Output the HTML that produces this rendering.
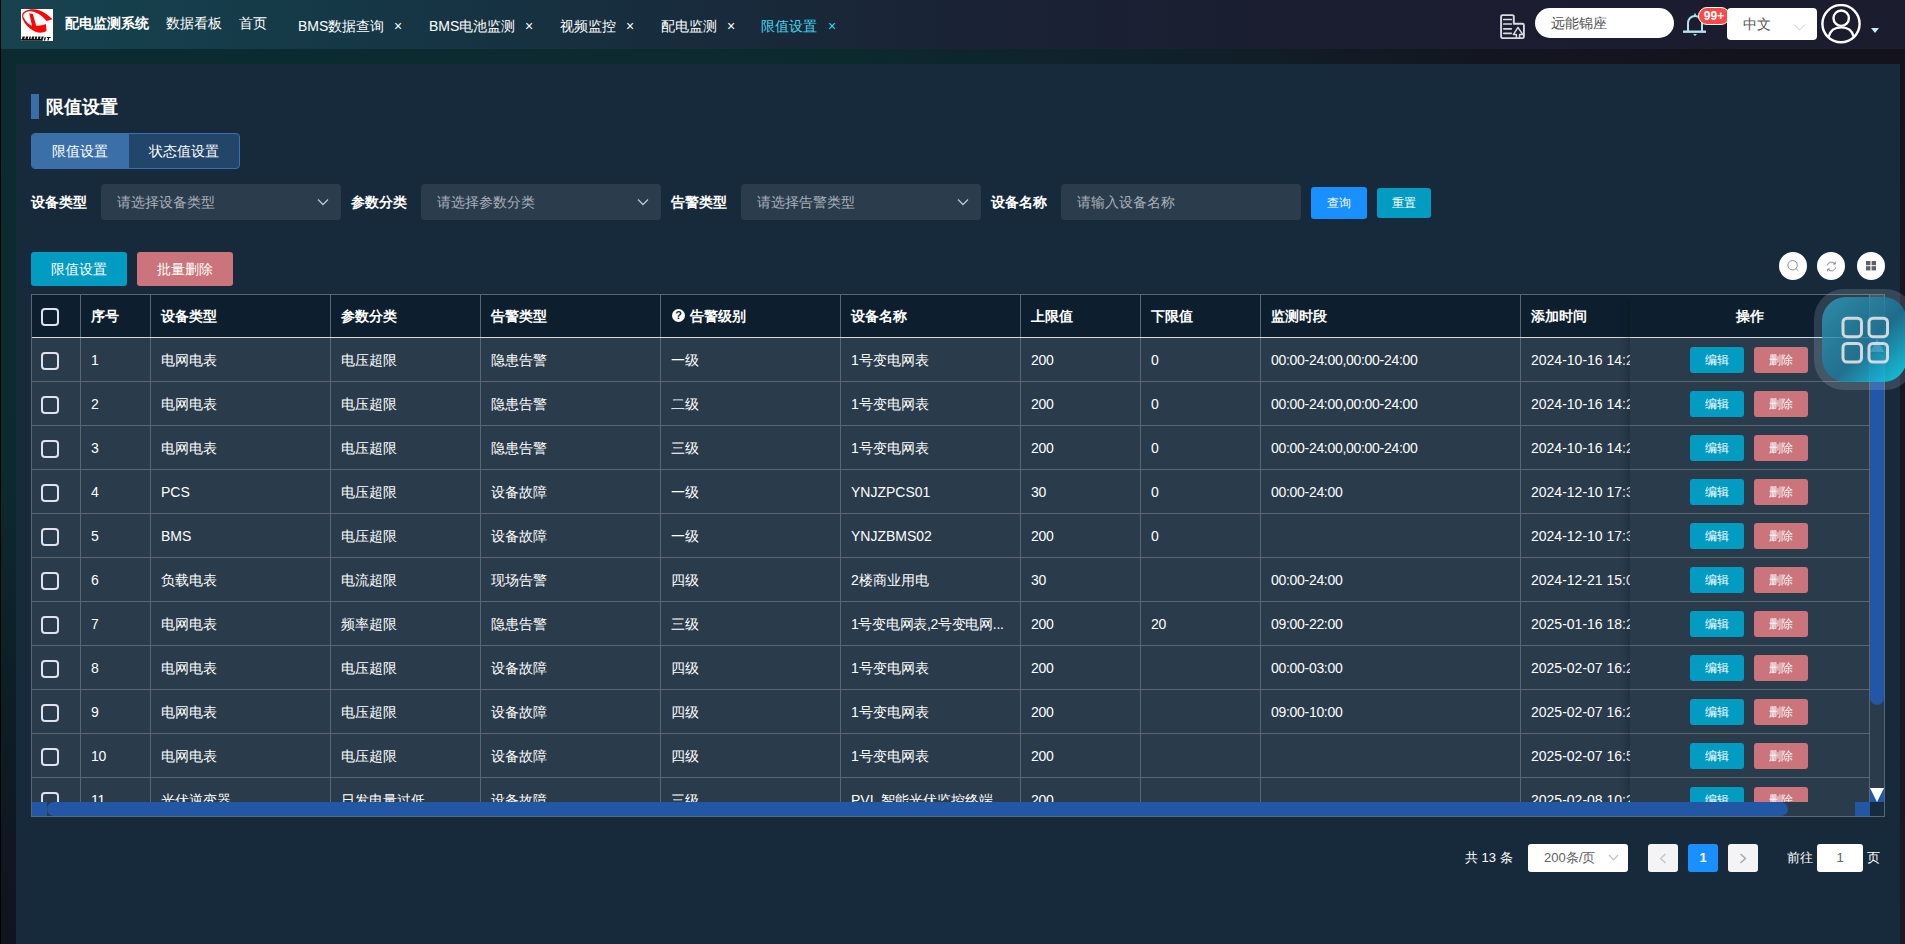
<!DOCTYPE html>
<html lang="zh"><head><meta charset="utf-8"><title>限值设置</title>
<style>
*{box-sizing:border-box;margin:0;padding:0}
html,body{width:1905px;height:944px;overflow:hidden}
body{font-family:"Liberation Sans",sans-serif;font-size:14px;color:#fff;position:relative;
 background:linear-gradient(100deg,#0b2d32 0%,#0d2329 40%,#12131f 80%,#13121d 100%);}
.abs{position:absolute}
#edgeL{position:absolute;left:0;top:0;width:1px;height:944px;background:#000;z-index:50}
#hdr{position:absolute;left:0;top:0;width:1905px;height:49px;background:linear-gradient(90deg,#17434f 0%,#153a48 15%,#182b3c 37%,#1a2235 52%,#1b1d30 70%,#1b1c2e 100%)}
#hdr .t{position:absolute;white-space:nowrap;font-size:14px;line-height:20px;color:#fff}
#logo{position:absolute;left:21px;top:9px;width:32px;height:32px;background:#fff}
#panel{position:absolute;left:16px;top:64px;width:1884px;height:880px;background:#172a3b}
#title{position:absolute;left:46px;top:94px;font-size:18px;font-weight:bold;line-height:26px;white-space:nowrap}
#tbar{position:absolute;left:31px;top:94px;width:8px;height:25px;background:#3b6ea8}
#tabs{position:absolute;left:31px;top:133px;width:209px;height:36px;border:1px solid #3a70ae;border-radius:4px;background:#22456a;overflow:hidden}
#tabs .a{position:absolute;left:0;top:0;width:96px;height:34px;background:#3a6fa7;line-height:34px;text-align:center}
#tabs .b{position:absolute;left:96px;top:0;width:111px;height:34px;line-height:34px;text-align:center;border-left:1px solid #3a70ae}
.lab{position:absolute;top:192px;font-weight:bold;line-height:20px;white-space:nowrap}
.sel{position:absolute;top:184px;width:240px;height:36px;border-radius:4px;background:#2b3c4d;color:#a8b0ba;line-height:36px;padding-left:16px;white-space:nowrap}
.sel svg{position:absolute;right:12px;top:12px}
.btn{position:absolute;border-radius:3px;text-align:center;white-space:nowrap;color:#fff}
#table{position:absolute;left:31px;top:294px;width:1854px;height:523px;border:1px solid #5c6670;overflow:hidden;background:#2a3b4c}
.thead{position:absolute;left:0;top:0;width:1838px;height:43px;background:#0d1f2f;border-bottom:1px solid #d5d9dd;font-weight:bold}
.hc{position:absolute;top:0;height:42px;line-height:42px;padding-left:10px;border-left:1px solid #5c6670;white-space:nowrap;overflow:hidden}
.tr{position:absolute;left:0;width:1838px;height:44px;border-bottom:1px solid #5c6670}
.c{position:absolute;top:0;height:43px;line-height:45px;padding-left:10px;border-left:1px solid #5c6670;white-space:nowrap;overflow:hidden}
.n{letter-spacing:-0.3px}
.cb{position:absolute;left:9px;top:14px;width:18px;height:18px;border:2px solid #dfe2ec;border-radius:4px}
.q{position:absolute;left:11px;top:14px;width:13px;height:13px;border-radius:50%;background:#fff;color:#0d1f2f;font-size:11px;line-height:13px;text-align:center;font-weight:bold}
#fixed{position:absolute;left:1598px;top:0;width:239px;height:507px;background:#2a3b4c;box-shadow:-6px 0 8px -4px rgba(0,0,0,.25)}
.fh{position:absolute;left:0;top:0;width:239px;height:43px;line-height:42px;background:#0d1f2f;border-bottom:1px solid #d5d9dd;font-weight:bold;text-align:center}
.fr{position:absolute;left:0;width:239px;height:44px;border-bottom:1px solid #5c6670}
.be,.bd{position:absolute;top:9px;width:54px;height:26px;border-radius:3px;font-size:12px;line-height:26px;text-align:center;color:#fff}
.be{left:60px;background:#029bc2}
.bd{left:124px;background:#cb747c}
#vsb{position:absolute;left:1837px;top:0;width:15px;height:507px;background:#2a3b4c;border-left:1px solid #5c6670}
#hsb{position:absolute;left:0;top:507px;width:1853px;height:14px;background:#2a3b4c}
.pg{position:absolute;top:844px;height:28px;border-radius:3px;line-height:28px;text-align:center;font-size:13px}
.circ{position:absolute;top:252px;width:28px;height:28px;border-radius:50%;background:#fff}
</style></head><body>
<div id="hdr">
 <div id="logo"><svg width="32" height="32" viewBox="0 0 32 32"><path d="M1 7 C1.2 2.5 6 0.2 12.5 0.3 C20 0.6 26.5 5.5 31.6 10.3 L25.6 11.9 C21 6.5 15 2.4 9 2.3 C5 2.3 2.3 4.5 2.2 7.5 Z" fill="#fb0505"/><path d="M1 7 C1.5 11 4.5 16 9 19.5 C13 22.8 17.5 24 21 23.6 C23 23.4 24.6 22.6 25.6 21.5 L24.8 15.1 C22 16.3 18.5 16.9 15.1 16.7 L11.9 5 L8.2 4.2 L11 16.8 C8 15.8 4.5 12.5 2.2 7.5 Z" fill="#fb0505"/><g fill="#111"><path d="M0.2 30 H21.5 L21.8 31.7 H0.2 Z"/><path d="M1.5 27.6 L4 27.6 L3.2 30.6 L0.8 30.6 Z M5 27.6 L7.3 27.6 L6.6 30.6 L4.2 30.6 Z M8.4 27.6 L10 27.6 L9.4 30.6 L7.7 30.6 Z M11 27.6 L13.4 27.6 L12.7 30.6 L10.3 30.6 Z M14.3 27.6 L16.3 27.6 L15.6 30.6 L13.7 30.6 Z M17.3 27.6 L19.6 27.6 L19 30.6 L16.7 30.6 Z M20.6 27.6 L22.6 27.6 L22 30.6 L20 30.6 Z M23.5 28.2 L25 28.2 L24.2 31.6 L22.8 31.6 Z M26 28 L29.8 28 L29.5 29 L28.3 29 L27.6 31.4 L26.3 31.4 L27 29 L25.7 29 Z"/></g></svg></div>
 <div class="t" style="left:65px;top:13px;font-weight:bold">配电监测系统</div>
 <div class="t" style="left:166px;top:13px">数据看板</div>
 <div class="t" style="left:239px;top:13px">首页</div>
 <div class="t" style="left:298px;top:16px">BMS数据查询</div><div class="t x" style="left:394px;top:16px">×</div>
 <div class="t" style="left:429px;top:16px">BMS电池监测</div><div class="t x" style="left:525px;top:16px">×</div>
 <div class="t" style="left:560px;top:16px">视频监控</div><div class="t x" style="left:626px;top:16px">×</div>
 <div class="t" style="left:661px;top:16px">配电监测</div><div class="t x" style="left:727px;top:16px">×</div>
 <div class="t" style="left:761px;top:16px;color:#3fd6ec">限值设置</div><div class="t x" style="left:828px;top:16px;color:#3fd6ec">×</div>
 <svg class="abs" style="left:1500px;top:14px" width="25" height="25" viewBox="0 0 25 25" fill="none" stroke="#d9dbe1" stroke-width="1.9" stroke-linejoin="round" stroke-linecap="round"><path d="M2.6 1.1 H12.3 a1.5 1.5 0 0 1 1.5 1.5 V9.7 H22.4 a1.5 1.5 0 0 1 1.5 1.5 V22.6 a1.5 1.5 0 0 1 -1.5 1.5 H2.6 a1.5 1.5 0 0 1 -1.5 -1.5 V2.6 a1.5 1.5 0 0 1 1.5 -1.5 Z"/><path d="M3.8 5.5 H11.3 M3.8 10 H11.3 M3.8 14.8 H11.3 M3.8 19.3 H11.3" stroke-width="1.7"/><path d="M16.4 23.6 V20.6 H13.3 L18 13.4 L22.8 20.6 H19.6 V23.6" stroke-width="1.5"/></svg>
 <div class="abs" style="left:1535px;top:8px;width:139px;height:30px;border-radius:15px;background:#fff;color:#555;line-height:30px;padding-left:16px;font-size:14px">远能锦座</div>
 <svg class="abs" style="left:1683px;top:12px" width="24" height="26" viewBox="0 0 24 26" fill="none" stroke="#b4e0f0" stroke-width="2"><path d="M5 19 V11 a7 7 0 0 1 14 0 V19"/><path d="M0 19.7 H23" stroke-width="2.4"/><path d="M10 22 L12 24 L14 22 Z" fill="#b4e0f0" stroke="none"/><path d="M12 4 V1.4" stroke-width="1.6"/></svg>
 <div class="abs" style="left:1698px;top:7px;width:32px;height:18px;border-radius:9px;border:1px solid #fff;background:#f94a4a;color:#fff;font-size:12px;line-height:16px;text-align:center;font-weight:bold">99+</div>
 <div class="abs" style="left:1727px;top:8px;width:90px;height:32px;border-radius:4px;background:#fff;z-index:3;color:#555;line-height:32px;padding-left:16px;font-size:14px">中文<svg class="abs" style="left:66px;top:16px" width="13" height="7" viewBox="0 0 13 7" fill="none" stroke="#c3c8d6" stroke-width="1"><path d="M1 0.5 L6.5 6 L12 0.5"/></svg></div>
 <svg class="abs" style="left:1821px;top:4px" width="40" height="40" viewBox="0 0 40 40" fill="none" stroke="#fff" stroke-width="2.4"><circle cx="20" cy="19.7" r="18.6"/><circle cx="20.2" cy="14.2" r="7.7"/><path d="M7.6 32.8 C9.2 26.5 14 23.4 20.2 23.4 C26.4 23.4 31.2 26.5 32.8 32.8"/></svg>
 <div class="abs" style="left:1871px;top:28px;width:0;height:0;border-left:4px solid transparent;border-right:4px solid transparent;border-top:5px solid #c4ecfb"></div>
</div>
<div id="panel"></div>
<div class="abs" style="left:1900px;top:49px;width:5px;height:895px;background:linear-gradient(180deg,#13121d 0%,#1a1725 50%,#1c1826 100%)"></div><div class="abs" style="left:0;top:49px;width:1900px;height:15px;background:linear-gradient(90deg,#0b2b30 0%,#0c292e 45%,#10202a 62%,#13151f 80%,#13121d 100%)"></div><div class="abs" style="left:0;top:64px;width:16px;height:880px;background:linear-gradient(180deg,#0b2b30 0%,#0b2a2e 48%,#0e1c24 75%,#10141f 100%)"></div>
<div id="tbar"></div><div id="title">限值设置</div>
<div id="tabs"><div class="a">限值设置</div><div class="b">状态值设置</div></div>
<div class="lab" style="left:31px">设备类型</div>
<div class="sel" style="left:101px">请选择设备类型<svg width="12" height="12" viewBox="0 0 12 12" fill="none" stroke="#c0c4cc" stroke-width="1.3"><path d="M1 3.5 L6 8.5 L11 3.5"/></svg></div>
<div class="lab" style="left:351px">参数分类</div>
<div class="sel" style="left:421px">请选择参数分类<svg width="12" height="12" viewBox="0 0 12 12" fill="none" stroke="#c0c4cc" stroke-width="1.3"><path d="M1 3.5 L6 8.5 L11 3.5"/></svg></div>
<div class="lab" style="left:671px">告警类型</div>
<div class="sel" style="left:741px">请选择告警类型<svg width="12" height="12" viewBox="0 0 12 12" fill="none" stroke="#c0c4cc" stroke-width="1.3"><path d="M1 3.5 L6 8.5 L11 3.5"/></svg></div>
<div class="lab" style="left:991px">设备名称</div>
<div class="sel" style="left:1061px">请输入设备名称</div>
<div class="btn" style="left:1311px;top:187px;width:56px;height:32px;line-height:32px;font-size:12px;background:#1890ff">查询</div>
<div class="btn" style="left:1377px;top:188px;width:54px;height:30px;line-height:30px;font-size:12px;background:#029bc2">重置</div>
<div class="btn" style="left:31px;top:252px;width:96px;height:34px;line-height:34px;font-size:14px;background:#029bc2">限值设置</div>
<div class="btn" style="left:137px;top:252px;width:96px;height:34px;line-height:34px;font-size:14px;background:#cb747c">批量删除</div>
<div class="circ" style="left:1779px"><svg class="abs" style="left:8px;top:8px" width="12" height="12" viewBox="0 0 12 12" fill="none" stroke="#7b7f88" stroke-width="0.9"><circle cx="5.6" cy="5.2" r="4.7"/><path d="M9 8.6 L11.3 10.8"/></svg></div>
<div class="circ" style="left:1817px"><svg class="abs" style="left:8.5px;top:8.5px" width="11" height="11" viewBox="0 0 11 11" fill="none" stroke="#7b7f88" stroke-width="0.9"><path d="M1.2 4.6 A4.4 4.4 0 0 1 9 2.8 M9.8 6.4 A4.4 4.4 0 0 1 2 8.2"/><path d="M9.3 0.6 V3 H6.9 M1.7 10.4 V8 H4.1"/></svg></div>
<div class="circ" style="left:1857px"><svg class="abs" style="left:9px;top:9px" width="10" height="10" viewBox="0 0 10 10" fill="#5d6066"><rect x="0" y="0" width="4.4" height="4.2"/><rect x="5.6" y="0" width="4.4" height="4.2"/><rect x="0" y="5.2" width="4.4" height="4.2"/><rect x="5.6" y="5.2" width="4.4" height="4.2"/></svg></div>
<div id="table">
<div class="thead"><div class="hc" style="left:0;width:48px;border-left:0"><span class="cb" style="top:13px"></span></div><div class="hc" style="left:48px;width:70px">序号</div><div class="hc" style="left:118px;width:180px">设备类型</div><div class="hc" style="left:298px;width:150px">参数分类</div><div class="hc" style="left:448px;width:180px">告警类型</div><div class="hc" style="left:628px;width:180px"><span class="q">?</span><span style="margin-left:19px">告警级别</span></div><div class="hc" style="left:808px;width:180px">设备名称</div><div class="hc" style="left:988px;width:120px">上限值</div><div class="hc" style="left:1108px;width:120px">下限值</div><div class="hc" style="left:1228px;width:260px">监测时段</div><div class="hc" style="left:1488px;width:349px">添加时间</div></div><div class="tr" style="top:43px"><div class="c" style="left:0;width:48px;border-left:0"><span class="cb"></span></div><div class="c n" style="left:48px;width:70px">1</div><div class="c" style="left:118px;width:180px">电网电表</div><div class="c" style="left:298px;width:150px">电压超限</div><div class="c" style="left:448px;width:180px">隐患告警</div><div class="c" style="left:628px;width:180px">一级</div><div class="c" style="left:808px;width:180px">1号变电网表</div><div class="c n" style="left:988px;width:120px">200</div><div class="c n" style="left:1108px;width:120px">0</div><div class="c n" style="left:1228px;width:260px">00:00-24:00,00:00-24:00</div><div class="c" style="left:1488px;width:349px">2024-10-16 14:23</div></div><div class="tr" style="top:87px"><div class="c" style="left:0;width:48px;border-left:0"><span class="cb"></span></div><div class="c n" style="left:48px;width:70px">2</div><div class="c" style="left:118px;width:180px">电网电表</div><div class="c" style="left:298px;width:150px">电压超限</div><div class="c" style="left:448px;width:180px">隐患告警</div><div class="c" style="left:628px;width:180px">二级</div><div class="c" style="left:808px;width:180px">1号变电网表</div><div class="c n" style="left:988px;width:120px">200</div><div class="c n" style="left:1108px;width:120px">0</div><div class="c n" style="left:1228px;width:260px">00:00-24:00,00:00-24:00</div><div class="c" style="left:1488px;width:349px">2024-10-16 14:23</div></div><div class="tr" style="top:131px"><div class="c" style="left:0;width:48px;border-left:0"><span class="cb"></span></div><div class="c n" style="left:48px;width:70px">3</div><div class="c" style="left:118px;width:180px">电网电表</div><div class="c" style="left:298px;width:150px">电压超限</div><div class="c" style="left:448px;width:180px">隐患告警</div><div class="c" style="left:628px;width:180px">三级</div><div class="c" style="left:808px;width:180px">1号变电网表</div><div class="c n" style="left:988px;width:120px">200</div><div class="c n" style="left:1108px;width:120px">0</div><div class="c n" style="left:1228px;width:260px">00:00-24:00,00:00-24:00</div><div class="c" style="left:1488px;width:349px">2024-10-16 14:23</div></div><div class="tr" style="top:175px"><div class="c" style="left:0;width:48px;border-left:0"><span class="cb"></span></div><div class="c n" style="left:48px;width:70px">4</div><div class="c" style="left:118px;width:180px">PCS</div><div class="c" style="left:298px;width:150px">电压超限</div><div class="c" style="left:448px;width:180px">设备故障</div><div class="c" style="left:628px;width:180px">一级</div><div class="c" style="left:808px;width:180px">YNJZPCS01</div><div class="c n" style="left:988px;width:120px">30</div><div class="c n" style="left:1108px;width:120px">0</div><div class="c n" style="left:1228px;width:260px">00:00-24:00</div><div class="c" style="left:1488px;width:349px">2024-12-10 17:33</div></div><div class="tr" style="top:219px"><div class="c" style="left:0;width:48px;border-left:0"><span class="cb"></span></div><div class="c n" style="left:48px;width:70px">5</div><div class="c" style="left:118px;width:180px">BMS</div><div class="c" style="left:298px;width:150px">电压超限</div><div class="c" style="left:448px;width:180px">设备故障</div><div class="c" style="left:628px;width:180px">一级</div><div class="c" style="left:808px;width:180px">YNJZBMS02</div><div class="c n" style="left:988px;width:120px">200</div><div class="c n" style="left:1108px;width:120px">0</div><div class="c n" style="left:1228px;width:260px"></div><div class="c" style="left:1488px;width:349px">2024-12-10 17:33</div></div><div class="tr" style="top:263px"><div class="c" style="left:0;width:48px;border-left:0"><span class="cb"></span></div><div class="c n" style="left:48px;width:70px">6</div><div class="c" style="left:118px;width:180px">负载电表</div><div class="c" style="left:298px;width:150px">电流超限</div><div class="c" style="left:448px;width:180px">现场告警</div><div class="c" style="left:628px;width:180px">四级</div><div class="c" style="left:808px;width:180px">2楼商业用电</div><div class="c n" style="left:988px;width:120px">30</div><div class="c n" style="left:1108px;width:120px"></div><div class="c n" style="left:1228px;width:260px">00:00-24:00</div><div class="c" style="left:1488px;width:349px">2024-12-21 15:03</div></div><div class="tr" style="top:307px"><div class="c" style="left:0;width:48px;border-left:0"><span class="cb"></span></div><div class="c n" style="left:48px;width:70px">7</div><div class="c" style="left:118px;width:180px">电网电表</div><div class="c" style="left:298px;width:150px">频率超限</div><div class="c" style="left:448px;width:180px">隐患告警</div><div class="c" style="left:628px;width:180px">三级</div><div class="c n" style="left:808px;width:180px">1号变电网表,2号变电网...</div><div class="c n" style="left:988px;width:120px">200</div><div class="c n" style="left:1108px;width:120px">20</div><div class="c n" style="left:1228px;width:260px">09:00-22:00</div><div class="c" style="left:1488px;width:349px">2025-01-16 18:23</div></div><div class="tr" style="top:351px"><div class="c" style="left:0;width:48px;border-left:0"><span class="cb"></span></div><div class="c n" style="left:48px;width:70px">8</div><div class="c" style="left:118px;width:180px">电网电表</div><div class="c" style="left:298px;width:150px">电压超限</div><div class="c" style="left:448px;width:180px">设备故障</div><div class="c" style="left:628px;width:180px">四级</div><div class="c" style="left:808px;width:180px">1号变电网表</div><div class="c n" style="left:988px;width:120px">200</div><div class="c n" style="left:1108px;width:120px"></div><div class="c n" style="left:1228px;width:260px">00:00-03:00</div><div class="c" style="left:1488px;width:349px">2025-02-07 16:23</div></div><div class="tr" style="top:395px"><div class="c" style="left:0;width:48px;border-left:0"><span class="cb"></span></div><div class="c n" style="left:48px;width:70px">9</div><div class="c" style="left:118px;width:180px">电网电表</div><div class="c" style="left:298px;width:150px">电压超限</div><div class="c" style="left:448px;width:180px">设备故障</div><div class="c" style="left:628px;width:180px">四级</div><div class="c" style="left:808px;width:180px">1号变电网表</div><div class="c n" style="left:988px;width:120px">200</div><div class="c n" style="left:1108px;width:120px"></div><div class="c n" style="left:1228px;width:260px">09:00-10:00</div><div class="c" style="left:1488px;width:349px">2025-02-07 16:23</div></div><div class="tr" style="top:439px"><div class="c" style="left:0;width:48px;border-left:0"><span class="cb"></span></div><div class="c n" style="left:48px;width:70px">10</div><div class="c" style="left:118px;width:180px">电网电表</div><div class="c" style="left:298px;width:150px">电压超限</div><div class="c" style="left:448px;width:180px">设备故障</div><div class="c" style="left:628px;width:180px">四级</div><div class="c" style="left:808px;width:180px">1号变电网表</div><div class="c n" style="left:988px;width:120px">200</div><div class="c n" style="left:1108px;width:120px"></div><div class="c n" style="left:1228px;width:260px"></div><div class="c" style="left:1488px;width:349px">2025-02-07 16:53</div></div><div class="tr" style="top:483px"><div class="c" style="left:0;width:48px;border-left:0"><span class="cb"></span></div><div class="c n" style="left:48px;width:70px">11</div><div class="c" style="left:118px;width:180px">光伏逆变器</div><div class="c" style="left:298px;width:150px">日发电量过低</div><div class="c" style="left:448px;width:180px">设备故障</div><div class="c" style="left:628px;width:180px">三级</div><div class="c" style="left:808px;width:180px">PVI_智能光伏监控终端</div><div class="c n" style="left:988px;width:120px">200</div><div class="c n" style="left:1108px;width:120px"></div><div class="c n" style="left:1228px;width:260px"></div><div class="c" style="left:1488px;width:349px">2025-02-08 10:23</div></div>
<div id="fixed"><div class="fh">操作</div><div class="fr" style="top:43px"><span class="be">编辑</span><span class="bd">删除</span></div><div class="fr" style="top:87px"><span class="be">编辑</span><span class="bd">删除</span></div><div class="fr" style="top:131px"><span class="be">编辑</span><span class="bd">删除</span></div><div class="fr" style="top:175px"><span class="be">编辑</span><span class="bd">删除</span></div><div class="fr" style="top:219px"><span class="be">编辑</span><span class="bd">删除</span></div><div class="fr" style="top:263px"><span class="be">编辑</span><span class="bd">删除</span></div><div class="fr" style="top:307px"><span class="be">编辑</span><span class="bd">删除</span></div><div class="fr" style="top:351px"><span class="be">编辑</span><span class="bd">删除</span></div><div class="fr" style="top:395px"><span class="be">编辑</span><span class="bd">删除</span></div><div class="fr" style="top:439px"><span class="be">编辑</span><span class="bd">删除</span></div><div class="fr" style="top:483px"><span class="be">编辑</span><span class="bd">删除</span></div></div>
<div id="vsb">
 <div class="abs" style="left:0;top:43px;width:14px;height:14px;background:#2257a5"></div>
 <div class="abs" style="left:0;top:44px;width:0;height:0;border-left:7px solid transparent;border-right:7px solid transparent;border-bottom:13px solid #fff"></div>
 <div class="abs" style="left:0;top:57px;width:14px;height:353px;background:#2257a5;border-radius:7px"></div>
 <div class="abs" style="left:0;top:493px;width:14px;height:14px;background:#2257a5"></div>
 <div class="abs" style="left:0;top:493px;width:0;height:0;border-left:7px solid transparent;border-right:7px solid transparent;border-top:14px solid #fff"></div>
</div>
<div id="hsb">
 <div class="abs" style="left:0;top:0;width:15px;height:14px;background:#2257a5"></div>
 <div class="abs" style="left:15px;top:0;width:1741px;height:14px;background:#2257a5;border-radius:7px"></div>
 <div class="abs" style="left:1823px;top:0;width:15px;height:14px;background:#2257a5"></div>
 <div class="abs" style="left:1838px;top:0;width:15px;height:14px;background:#162b3c"></div>
</div>
</div>
<div class="abs" style="left:1465px;top:848px;line-height:20px;font-size:13px;white-space:nowrap">共 13 条</div>
<div class="pg" style="left:1528px;width:100px;background:#fff;color:#606266;text-align:left;padding-left:16px">200条/页<svg class="abs" style="left:80px;top:10px" width="11" height="8" viewBox="0 0 11 8" fill="none" stroke="#c0c4cc" stroke-width="1.2"><path d="M1 1 L5.5 6 L10 1"/></svg></div>
<div class="pg" style="left:1648px;width:30px;background:#f4f4f5"><svg class="abs" style="left:11px;top:9px" width="8" height="11" viewBox="0 0 8 11" fill="none" stroke="#c0c4cc" stroke-width="1.4"><path d="M6.5 1 L1.5 5.5 L6.5 10"/></svg></div>
<div class="pg" style="left:1688px;width:30px;background:#1890ff;color:#fff;font-weight:bold">1</div>
<div class="pg" style="left:1728px;width:30px;background:#f4f4f5"><svg class="abs" style="left:11px;top:9px" width="8" height="11" viewBox="0 0 8 11" fill="none" stroke="#a0a4ac" stroke-width="1.4"><path d="M1.5 1 L6.5 5.5 L1.5 10"/></svg></div>
<div class="abs" style="left:1787px;top:848px;line-height:20px;font-size:13px;white-space:nowrap">前往</div>
<div class="pg" style="left:1817px;width:46px;background:#fff;color:#606266">1</div>
<div class="abs" style="left:1867px;top:848px;line-height:20px;font-size:13px;white-space:nowrap">页</div>
<div id="float" class="abs" style="left:1814px;top:289px;width:101px;height:101px;border-radius:30px;background:rgba(205,220,235,.17)">
 <div class="abs" style="left:8px;top:8px;width:85px;height:85px;border-radius:24px;background:linear-gradient(135deg,rgba(49,160,188,.8) 0%,rgba(24,118,152,.8) 55%,rgba(16,200,228,.85) 90%)"></div>
 <svg class="abs" style="left:26px;top:26px" width="52" height="50" viewBox="0 0 52 50" fill="none" stroke="#d3d8dc" stroke-width="3"><rect x="3" y="3.2" width="18.5" height="18.5" rx="4"/><rect x="29" y="3.2" width="18.5" height="18.5" rx="4"/><rect x="3" y="28.5" width="18.5" height="18.5" rx="4"/><rect x="29" y="28.5" width="18.5" height="18.5" rx="4"/></svg>
</div>
<div id="edgeL"></div>
</body></html>
